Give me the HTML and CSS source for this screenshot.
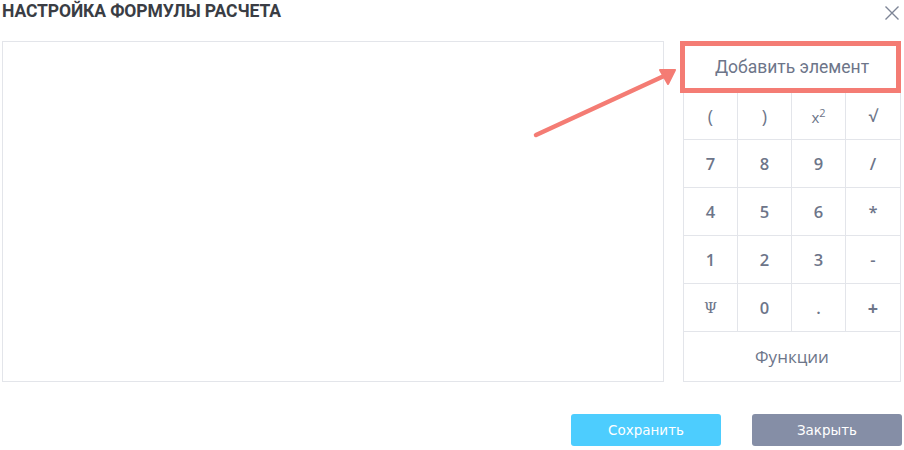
FILE: index.html
```html
<!DOCTYPE html>
<html lang="ru">
<head>
    <meta charset="UTF-8">
    <title>Настройка формулы расчета</title>
    <link rel="stylesheet" href="styles.css">
</head>
<body>
    <div class="modal">
        <div class="modal-header">
            <h1>НАСТРОЙКА ФОРМУЛЫ РАСЧЕТА</h1>
            <button class="close-btn" aria-label="Закрыть">
                <svg width="16" height="16" viewBox="0 0 16 16">
                    <path d="M1.5 1.5 L14.5 14.5 M14.5 1.5 L1.5 14.5" stroke="#7d8596" stroke-width="1.4" fill="none"/>
                </svg>
            </button>
        </div>
        <div class="modal-body">
            <div class="formula-area"></div>
            <div class="calc">
                <button class="calc-wide add-btn">Добавить элемент</button>
                <div class="calc-grid">
                    <button class="key key-paren">(</button>
                    <button class="key key-paren">)</button>
                    <button class="key key-sup">x<sup>2</sup></button>
                    <button class="key">√</button>
                    <button class="key">7</button>
                    <button class="key">8</button>
                    <button class="key">9</button>
                    <button class="key">/</button>
                    <button class="key">4</button>
                    <button class="key">5</button>
                    <button class="key">6</button>
                    <button class="key">*</button>
                    <button class="key">1</button>
                    <button class="key">2</button>
                    <button class="key">3</button>
                    <button class="key">-</button>
                    <button class="key key-psi">Ψ</button>
                    <button class="key">0</button>
                    <button class="key">.</button>
                    <button class="key key-plus">+</button>
                </div>
                <button class="calc-wide func-btn">Функции</button>
            </div>
        </div>
        <div class="modal-footer">
            <button class="btn btn-save">Сохранить</button>
            <button class="btn btn-close">Закрыть</button>
        </div>

        <!-- annotation overlay -->
        <div class="highlight"></div>
        <svg class="arrow" width="904" height="450" viewBox="0 0 904 450">
            <path d="M536 135 L664 76" stroke="#f47c74" stroke-width="4.5" stroke-linecap="round" fill="none"/>
            <path d="M675 70 L660 70 L668 84 Z" fill="#f47c74" stroke="#f47c74" stroke-width="2" stroke-linejoin="round"/>
        </svg>
    </div>
</body>
</html>
```

FILE: styles.css
```css
body {
    margin: 0;
    background-color: white;
    font-family: Roboto, "Open Sans", sans-serif;
}
.modal {
    position: relative;
    width: 904px;
    height: 450px;
    box-sizing: border-box;
    padding: 0 2px 0 2px;
}
.modal-header {
    display: flex;
    justify-content: space-between;
    align-items: center;
    height: 41px;
}
.modal-header h1 {
    margin: 0;
    margin-top: -19px;
    font-size: 17.5px;
    font-weight: 700;
    color: #3a3d44;
    letter-spacing: -0.1px;
}
.close-btn {
    background: none;
    border: none;
    padding: 0;
    margin-top: -16px;
    margin-right: 2px;
    width: 16px;
    height: 16px;
    cursor: pointer;
}
.modal-body {
    display: flex;
    gap: 19px;
    height: 341px;
    margin-right: 1px;
}
.formula-area {
    flex: 1;
    border: 1px solid #e3e5ea;
}
.calc {
    width: 218px;
    display: flex;
    flex-direction: column;
    border: 1px solid #e3e5ea;
    box-sizing: border-box;
}
button {
    font-family: inherit;
}
.calc-wide {
    background: white;
    border: none;
    color: #6d7589;
    cursor: pointer;
}
.add-btn {
    height: 50px;
    font-size: 17.5px;
    border-bottom: 1px solid #e3e5ea;
}
.func-btn {
    flex: 1;
    font-size: 17px;
    font-family: "Open Sans", sans-serif;
}
.calc-grid {
    display: grid;
    grid-template-columns: repeat(4, 1fr);
    grid-auto-rows: 48px;
}
.key {
    background: white;
    border: none;
    border-right: 1px solid #e3e5ea;
    border-bottom: 1px solid #e3e5ea;
    color: #6d7589;
    font-size: 16.5px;
    font-weight: 600;
    font-family: "Open Sans", sans-serif;
    cursor: pointer;
}
.key:nth-child(4n) {
    border-right: none;
}
.key-paren {
    font-weight: 400;
    font-size: 18px;
}
.key-sup {
    font-weight: 400;
    font-size: 15px;
}
.key-sup sup {
    font-size: 11px;
}
.key-psi {
    font-family: "DejaVu Serif", serif;
    font-weight: 400;
    font-size: 15px;
}
.key-plus {
    font-weight: 700;
    font-size: 18px;
}
.modal-footer {
    display: flex;
    justify-content: flex-end;
    gap: 31px;
    margin-top: 32px;
}
.btn {
    width: 150px;
    height: 32px;
    border: none;
    border-radius: 3px;
    color: white;
    font-family: "DejaVu Sans", sans-serif;
    font-size: 13.5px;
    cursor: pointer;
}
.btn-save {
    background-color: #4dcdfe;
}
.btn-close {
    background-color: #858ea6;
}
.highlight {
    position: absolute;
    left: 680px;
    top: 41px;
    width: 211px;
    height: 42px;
    border: 5px solid #f47c74;
}
.arrow {
    position: absolute;
    left: 0;
    top: 0;
    pointer-events: none;
}
```
